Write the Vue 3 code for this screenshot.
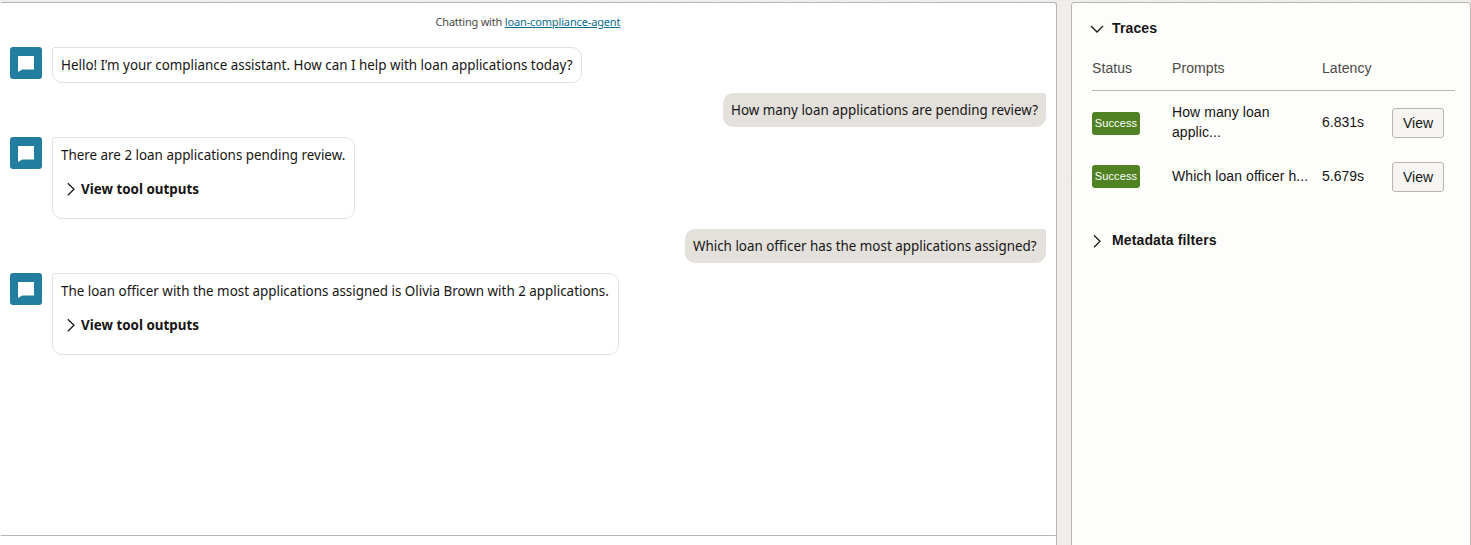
<script setup>
const messages = [
  { role: 'bot', key: 'hello', text: 'Hello! I’m your compliance assistant. How can I help with loan applications today?' },
  { role: 'user', key: 'pending', text: 'How many loan applications are pending review?' },
  { role: 'bot', key: 'count', text: 'There are 2 loan applications pending review.', tools: true },
  { role: 'user', key: 'officer', text: 'Which loan officer has the most applications assigned?' },
  { role: 'bot', key: 'answer', text: 'The loan officer with the most applications assigned is Olivia Brown with 2 applications.', tools: true },
]
const traces = [
  { key: 'first', prompt: 'How many loan applic...', latency: '6.831s' },
  { key: 'second', prompt: 'Which loan officer h...', latency: '5.679s' },
]
</script>

<template>
  <div class="page">
    <main class="chat">
      <section class="conversation">
        <p class="heading"><span class="with">Chatting with</span> <a class="agent">loan-compliance-agent</a></p>
        <div v-for="m in messages" :key="m.key" class="row" :class="m.role">
          <span v-if="m.role === 'bot'" class="avatar">
            <svg width="32" height="32" viewBox="0 0 32 32"><path d="M8 9h16v13.6H12.2L8 25z" fill="#fff" /></svg>
          </span>
          <div class="bubble" :class="[m.key, { tall: m.tools }]">
            <div class="line"><span class="words">{{ m.text }}</span></div>
            <div v-if="m.tools" class="tools">
              <svg width="8" height="14" viewBox="0 0 8 14"><path d="M.8 1.2 7 7.2 .8 13.2" /></svg>
              <b class="words">View tool outputs</b>
            </div>
          </div>
        </div>
      </section>
      <section class="composer"></section>
    </main>
    <aside class="side">
      <h2 class="section">
        <svg class="caret" width="14" height="14" viewBox="0 0 14 14"><path d="M1 4 7 10 13 4" /></svg>
        <span>Traces</span>
      </h2>
      <div class="grid head"><span>Status</span><span>Prompts</span><span>Latency</span></div>
      <div v-for="t in traces" :key="t.key" class="grid trace" :class="t.key">
        <span class="badge">Success</span>
        <span class="prompt">{{ t.prompt }}</span>
        <span>{{ t.latency }}</span>
        <button>View</button>
      </div>
      <h2 class="section filters">
        <svg class="caret" width="14" height="14" viewBox="0 0 14 14"><path d="M4 1.2 10 7.2 4 13.2" /></svg>
        <span>Metadata filters</span>
      </h2>
    </aside>
  </div>
</template>

<style>
html, body { margin: 0; overflow: hidden; background: #f0efed; }
</style>

<style scoped>
* { box-sizing: border-box; }
.page {
  display: flex; gap: 14px; width: 1471px; height: 545px; padding-top: 2px; overflow: hidden;
  color: #161513;
  background: repeating-radial-gradient(ellipse at 1020px 180px, #f1efed 0, #eeecea 5px, #f1efed 11px);
}
.chat { width: 1057px; height: 600px; flex: none; display: flex; flex-direction: column; font-family: "Noto Sans", sans-serif; }
.conversation { height: 534px; flex: none; background: #fff; border: 1px solid #bbb5ae; border-left-color: #fff; border-bottom: 0; border-radius: 3px 3px 0 0; padding: 10px 10px 0 9px; }
.composer { height: 60px; flex: none; background: #fff; border: 1px solid #bbb5ae; border-left-color: #fff; border-radius: 0 2px 0 0; margin-top: -1px; }
.heading { margin: 0; height: 34px; line-height: 18px; font-size: 11px; color: #4c4a48; text-align: center; letter-spacing: -0.14px; }
.with { letter-spacing: -0.23px; }
.agent { color: #0b6e8e; text-decoration: underline; }
.row { display: flex; gap: 10px; margin-bottom: 10px; }
.row.user { justify-content: flex-end; }
.avatar { width: 32px; height: 32px; flex: none; border-radius: 3px; background: #227e9e; }
.avatar svg { display: block; }
.bubble { border: 1px solid #e2e1df; border-radius: 3px 10px 10px 10px; padding: 6px 8px; height: 36px; font-size: 15px; white-space: nowrap; }
.user .bubble { height: 34px; border: 0; padding: 6px 8px; background: #e4e1dd; border-radius: 10px 3px 10px 10px; }
.bubble.tall { height: 82px; }
.line { line-height: 20px; }
.words { display: inline-block; transform: scaleX(0.893); transform-origin: left; }
.hello { width: 530px; }
.pending { width: 323px; }
.count { width: 303px; }
.officer { width: 361px; }
.answer { width: 567px; }
.tools { display: flex; align-items: center; gap: 6px; margin: 14px 0 0 6px; line-height: 20px; }
.tools svg { position: relative; top: 1px; }
svg path:not([fill]) { fill: none; stroke: #161513; stroke-width: 1.25; }
.side { width: 400px; height: 560px; flex: none; border: 1px solid #bbb5ae; border-radius: 3px; background: #fdfdfb; padding: 15px 15px 0 20px; font: 14px/20px "Liberation Sans", Arial, sans-serif; }
.section { display: flex; align-items: center; gap: 8px; margin: 0 0 0 -2px; height: 20px; font-size: 14px; font-weight: 700; letter-spacing: 0.13px; }
.caret { position: relative; top: 1px; }
.grid { display: grid; grid-template-columns: 80px 150px 70px 52px; align-items: center; }
.head { height: 53px; padding: 9px 0 1px; margin-bottom: 4px; border-bottom: 1px solid #bbb5ae; color: #4c4a48; letter-spacing: 0.08px; }
.trace { height: 54px; }
.badge { width: 48px; height: 23px; line-height: 23px; border-radius: 3px; background: #508223; color: #fff; font-size: 11px; text-align: center; letter-spacing: 0.1px; }
.first .badge { margin-top: 2px; }
.prompt { width: 140px; letter-spacing: 0.08px; }
.first .prompt { width: 110px; }
button { width: 52px; height: 30px; padding: 0; margin-top: 2px; border: 1px solid #bbb5ae; border-radius: 3px; background: #f6f5f3; color: #161513; font: inherit; }
.filters { margin-top: 27px; }
</style>
